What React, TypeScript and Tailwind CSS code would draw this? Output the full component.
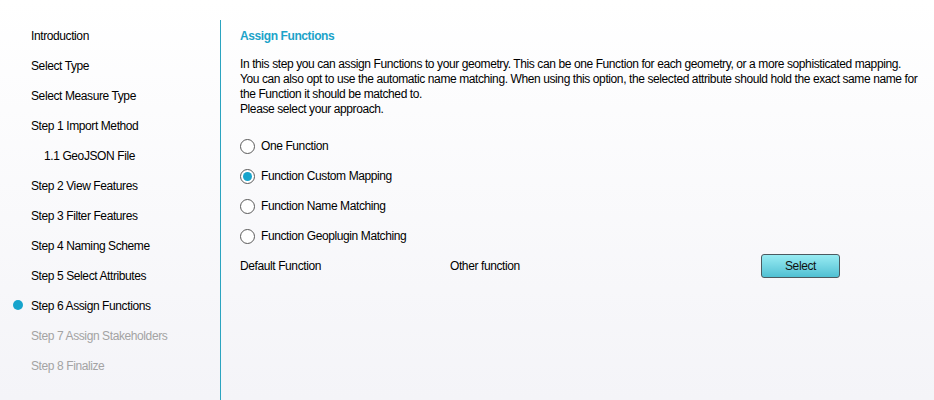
import React from "react";

const steps = [
  { label: "Introduction" },
  { label: "Select Type" },
  { label: "Select Measure Type" },
  { label: "Step 1 Import Method" },
  { label: "1.1 GeoJSON File", sub: true },
  { label: "Step 2 View Features" },
  { label: "Step 3 Filter Features" },
  { label: "Step 4 Naming Scheme" },
  { label: "Step 5 Select Attributes" },
  { label: "Step 6 Assign Functions", active: true },
  { label: "Step 7 Assign Stakeholders", disabled: true },
  { label: "Step 8 Finalize", disabled: true },
];

const options = [
  "One Function",
  "Function Custom Mapping",
  "Function Name Matching",
  "Function Geoplugin Matching",
];

const intro = [
  "In this step you can assign Functions to your geometry. This can be one Function for each geometry, or a more sophisticated mapping.",
  "You can also opt to use the automatic name matching. When using this option, the selected attribute should hold the exact same name for",
  "the Function it should be matched to.",
  "Please select your approach.",
];

function Radio({ checked }: { checked: boolean }) {
  return (
    <span className="w-[15px] h-[15px] rounded-full border border-[#5a5a5a] bg-white flex items-center justify-center shrink-0">
      {checked && <span className="w-[9px] h-[9px] rounded-full bg-[#17a4cc]" />}
    </span>
  );
}

export default function App() {
  const [selected, setSelected] = React.useState(1);

  return (
    <div
      className="w-[934px] h-[400px] flex bg-gradient-to-b from-white to-[#f4f4f8] text-[12px] tracking-[-0.4px] text-black overflow-hidden"
      style={{ fontFamily: '"Liberation Sans", Arial, sans-serif' }}
    >
      <aside className="w-[220px] pt-[21px] shrink-0">
        {steps.map((s) => (
          <div
            key={s.label}
            className={`h-[30px] flex items-center relative ${s.sub ? "pl-[44px]" : "pl-[31px]"} ${
              s.disabled ? "text-[#a3a3a3]" : ""
            }`}
          >
            {s.active && (
              <span className="absolute left-[13px] top-[9px] w-[10px] h-[10px] rounded-full bg-[#17a4cc]" />
            )}
            {s.label}
          </div>
        ))}
      </aside>

      <main className="flex-1 mt-[20px] pt-[1px] border-l border-[#2ba4c0] pl-[19px]">
        <div className="h-[30px] flex items-center font-bold text-[#1ba3c9]">Assign Functions</div>
        <div className="mt-[6px] leading-[15px] whitespace-nowrap">
          {intro.map((line) => (
            <div key={line}>{line}</div>
          ))}
        </div>

        <div className="mt-[14px]">
          {options.map((o, i) => (
            <label
              key={o}
              className="h-[30px] flex items-center gap-[6px] cursor-pointer"
              onClick={() => setSelected(i)}
            >
              <Radio checked={selected === i} />
              {o}
            </label>
          ))}
        </div>

        <div className="h-[30px] flex items-center">
          <span className="w-[210px]">Default Function</span>
          <span className="w-[311px]">Other function</span>
          <button className="w-[79px] h-[24px] rounded-[3px] border border-[#4c5a60] bg-gradient-to-b from-[#98ecf3] to-[#4fc0d3] text-[12px] text-[#111]">
            Select
          </button>
        </div>
      </main>
    </div>
  );
}
